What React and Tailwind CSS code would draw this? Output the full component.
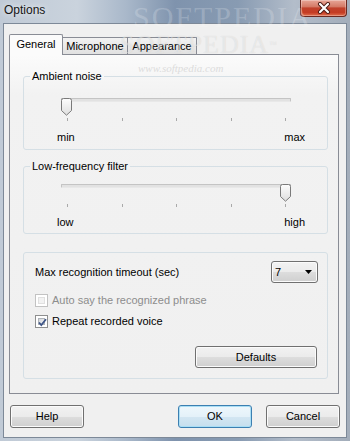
import React from 'react';

const btn =
  'h-[23px] w-[74px] rounded-[3px] border border-[#707070] bg-[linear-gradient(#f2f2f2_0%,#ebebeb_50%,#dddddd_51%,#cfcfcf_100%)] shadow-[inset_0_0_0_1px_#fbfbfb] flex items-center justify-center text-[11px] text-black';

const Thumb = () => (
  <svg width="11" height="18" viewBox="0 0 11 18">
    <defs>
      <linearGradient id="thumbFill" x1="0" y1="0" x2="0" y2="1">
        <stop offset="0" stopColor="#fdfdfd" />
        <stop offset="1" stopColor="#dedede" />
      </linearGradient>
    </defs>
    <path
      d="M0.5 2.5 Q0.5 0.5 2.5 0.5 H8.5 Q10.5 0.5 10.5 2.5 V12.5 L5.5 17.2 L0.5 12.5 Z"
      fill="url(#thumbFill)"
      stroke="#7a7a7a"
    />
  </svg>
);

const Slider = ({ atEnd, left, right, sliderTop, labelTop }) => (
  <>
    <div className={`relative ml-[37px] w-[230px] h-[18px] ${sliderTop}`}>
      <div className="mt-[5px] h-[4px] rounded-[1px] border border-[#c4c4c4] border-b-[#e8e8e8] bg-[#e2e2e2]" />
      <div className={`absolute top-0 ${atEnd ? 'right-0' : 'left-0'}`}>
        <Thumb />
      </div>
    </div>
    <div className="ml-[37px] w-[230px] mt-[2px] h-[3px] pl-[6px] pr-[5px] flex justify-between">
      {[0, 1, 2, 3, 4].map((i) => (
        <div key={i} className="w-px h-[3px] bg-[#a9a9a9]" />
      ))}
    </div>
    <div className={`ml-[33px] w-[248px] flex justify-between leading-[15px] ${labelTop}`}>
      <span>{left}</span>
      <span>{right}</span>
    </div>
  </>
);

const Checkbox = ({ checked, disabled }) => (
  <div
    className={`w-[13px] h-[13px] border p-[2px] bg-white ${
      disabled ? 'border-[#c2c2c2]' : 'border-[#8e8f8f]'
    }`}
  >
    <div
      className={`relative w-full h-full ${
        disabled
          ? 'bg-[#f2f2f2] border border-[#e0e0e0]'
          : 'bg-[linear-gradient(135deg,#d2d5da,#f6f6f6)] border border-[#aeb3b9]'
      }`}
    >
      {checked && (
        <svg className="absolute -left-[2px] -top-[2px]" width="11" height="11" viewBox="0 0 11 11">
          <path d="M2 5.5 L4.3 8 L9 2.2" fill="none" stroke="#3e5587" strokeWidth="1.8" />
        </svg>
      )}
    </div>
  </div>
);

export default function App() {
  return (
    <div className="relative w-[350px] h-[441px] overflow-hidden flex flex-col px-[3px] pb-[3px] bg-[linear-gradient(90deg,#c0cad6_0%,#cad3dd_22%,#a9b8ca_36%,#7f93ad_50%,#889bb2_68%,#b3bdca_84%,#a3adba_100%)] font-['Liberation_Sans',Arial,sans-serif] text-[11px] text-black">
      {/* title bar */}
      <div className="h-[23px] -mx-[3px] flex items-start justify-between">
        <span className="pl-[4px] pt-[2px] text-[12px] leading-[16px] text-[#151515] [text-shadow:0_0_6px_rgba(255,255,255,0.95)]">
          Options
        </span>
        <div className="mr-[3px] w-[47px] h-[17px] rounded-b-[4px] border border-t-0 border-[#6b2a22] bg-[linear-gradient(#e7a697_0%,#d47a66_42%,#c0412b_50%,#c43c24_78%,#e0704f_100%)] shadow-[inset_0_0_0_1px_rgba(255,255,255,0.3)] flex items-center justify-center">
          <svg width="14" height="12" viewBox="0 0 14 12">
            <path d="M3 2 L11 10 M11 2 L3 10" stroke="#4a1a14" strokeWidth="4" strokeLinecap="round" />
            <path d="M3 2 L11 10 M11 2 L3 10" stroke="#ffffff" strokeWidth="2.2" strokeLinecap="round" />
          </svg>
        </div>
      </div>

      {/* client area */}
      <div className="flex-1 flex flex-col bg-[#f0f0f0] border border-[#7d8998] pt-[10px]">
        <div className="ml-[5px] h-[20px] flex items-end">
          <div className="relative z-10 -mb-[1px] w-[54px] h-[21px] border border-b-0 border-[#898c95] rounded-t-[2px] bg-[#fbfbfb] flex items-center justify-center pb-[2px]">
            General
          </div>
          <div className="w-[65px] h-[17px] border-t border-r border-[#898c95] bg-[linear-gradient(#f2f2f2,#e1e1e1)] flex items-center justify-center">
            Microphone
          </div>
          <div className="w-[69px] h-[17px] border-t border-r border-[#898c95] bg-[linear-gradient(#f2f2f2,#e1e1e1)] flex items-center justify-center">
            Appearance
          </div>
        </div>

        <div className="ml-[5px] w-[330px] border border-[#898c95] bg-[linear-gradient(#fbfbfb_0px,#f2f2f2_40px,#f0f0f0_100%)] pt-[14px] pb-[14px]">
          <fieldset className="ml-[13px] w-[305px] rounded-[3px] border border-[#d5dfe5] pb-[4px]">
            <legend className="ml-[6px] px-[2px] leading-[14px]">Ambient noise</legend>
            <Slider atEnd={false} left="min" right="max" sliderTop="mt-[15px]" labelTop="mt-[9px]" />
          </fieldset>

          <fieldset className="mt-[9px] ml-[13px] w-[305px] rounded-[3px] border border-[#d5dfe5] pb-[3px]">
            <legend className="ml-[6px] px-[2px] leading-[14px]">Low-frequency filter</legend>
            <Slider atEnd left="low" right="high" sliderTop="mt-[11px]" labelTop="mt-[8px]" />
          </fieldset>

          <div className="mt-[18px] ml-[13px] w-[305px] rounded-[3px] border border-[#d5dfe5] pt-[8px] pb-[10px] pl-[11px] pr-[9px]">
            <div className="h-[22px] flex items-center justify-between">
              <span>Max recognition timeout (sec)</span>
              <div className="w-[47px] h-[22px] rounded-[3px] border border-[#707070] bg-[linear-gradient(#f2f2f2_0%,#ebebeb_50%,#dddddd_51%,#cfcfcf_100%)] shadow-[inset_0_0_0_1px_#fbfbfb] flex items-center justify-between pl-[3px] pr-[5px]">
                <span>7</span>
                <svg width="7" height="4" viewBox="0 0 7 4">
                  <path d="M0 0 H7 L3.5 4 Z" fill="#000" />
                </svg>
              </div>
            </div>
            <div className="mt-[9px] h-[16px] flex items-center gap-[4px]">
              <Checkbox disabled />
              <span className="text-[#8d8d8d]">Auto say the recognized phrase</span>
            </div>
            <div className="mt-[5px] h-[16px] flex items-center gap-[4px]">
              <Checkbox checked />
              <span>Repeat recorded voice</span>
            </div>
            <div className="mt-[17px] flex justify-end">
              <div className="mr-[1px] w-[122px] h-[22px] rounded-[3px] border border-[#707070] bg-[linear-gradient(#f2f2f2_0%,#ebebeb_50%,#dddddd_51%,#cfcfcf_100%)] shadow-[inset_0_0_0_1px_#fbfbfb] flex items-center justify-center">
                Defaults
              </div>
            </div>
          </div>
        </div>

        <div className="mt-[11px] px-[6px] flex items-center">
          <div className={btn}>Help</div>
          <div className="flex-1" />
          <div className="h-[23px] w-[74px] rounded-[3px] border border-[#3c7fb1] bg-[linear-gradient(#eef7fc_0%,#e4f1f9_50%,#d3e6f2_51%,#c6dfee_100%)] shadow-[inset_0_0_0_1px_#a9def5] flex items-center justify-center">
            OK
          </div>
          <div className={`ml-[14px] ${btn}`}>Cancel</div>
        </div>
      </div>

      {/* watermark */}
      <div className="pointer-events-none absolute left-[133px] -top-[6px] font-['Liberation_Serif',serif] text-[30px] tracking-[2px] text-white/20">
        SOFTPEDIA
      </div>
      <div className="pointer-events-none absolute left-[120px] top-[32px] leading-[26px] font-['Liberation_Serif',serif] text-[26px] tracking-[1px] text-white/45 [text-shadow:0_0_1px_rgba(0,0,0,0.12)]">
        SOFTPEDIA<span className="align-top text-[8px]">™</span>
      </div>
      <div className="pointer-events-none absolute left-[138px] top-[62px] leading-[12px] font-['Liberation_Serif',serif] italic text-[11px] text-[#dcdcdc]">
        www.softpedia.com
      </div>
    </div>
  );
}
